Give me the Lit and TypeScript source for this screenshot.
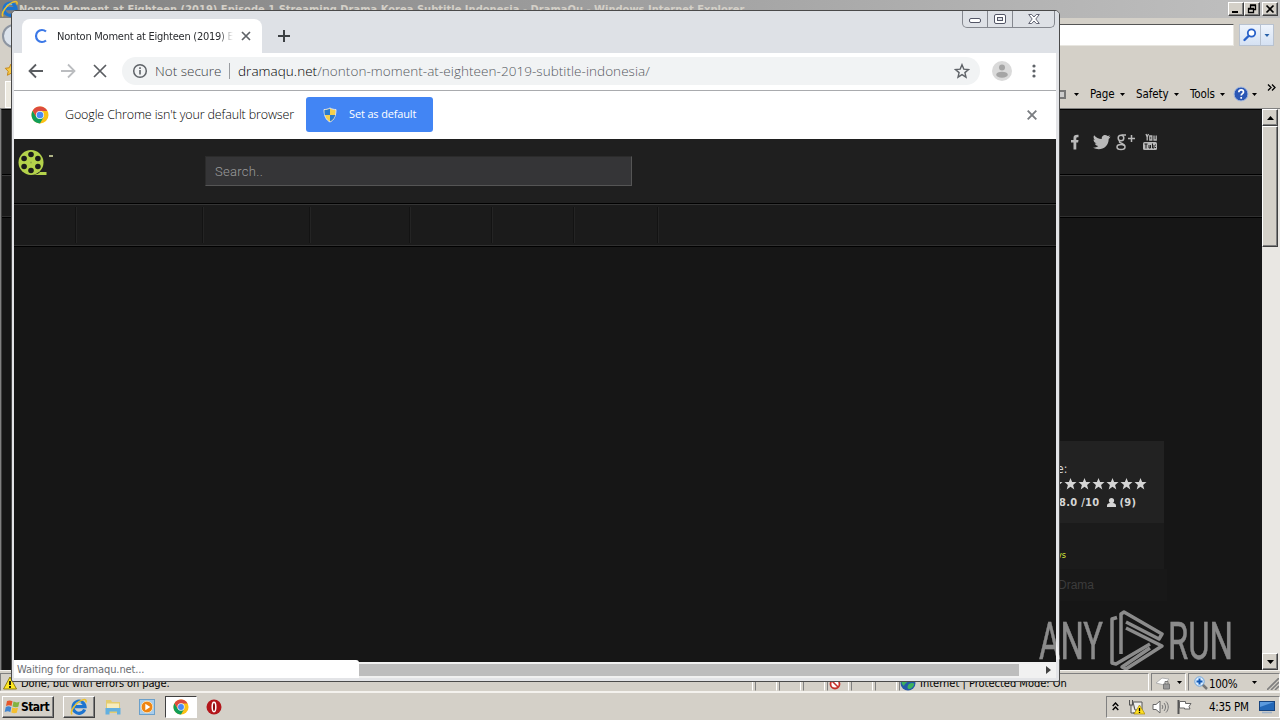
import { LitElement, css, html, svg } from 'lit'
import { customElement } from 'lit/decorators.js'

const chromeLogo = html`
  <svg class="chrome-logo" viewBox="0 0 18 18" width="18" height="18">
    <circle cx="9" cy="9" r="8.5" fill="#fbc116" />
    <path d="M9 9 5.3 11.1 1.64 4.75A8.5 8.5 0 0 0 9 17.5l3.7-6.4z" fill="#109d58" />
    <path d="M9 5H16.4A8.5 8.5 0 0 0 1.64 4.75L5.4 11z" fill="#dd4b3e" />
    <circle cx="9" cy="9" r="4.1" fill="#f4f4f4" />
    <circle cx="9" cy="9" r="3.3" fill="#4a8af4" />
  </svg>
`

const ieLogo = html`
  <svg viewBox="0 0 18 18" width="18" height="18">
    <path d="M14.600 11.500A6 6 0 1 1 15 8.700H5" fill="none" stroke="#1d74cf" stroke-width="3.200" />
    <path d="M5.200 7.500a4.500 4.500 0 0 1 6-3" fill="none" stroke="#6dc3f5" stroke-width="1.200" />
    <path d="M2.200 16.300C-.8 14 5.500 4.600 12 2.100c4-1.500 4.600.4 3.800 2.400" fill="none" stroke="#ecc02c" stroke-width="1.500" />
  </svg>
`

const caret = html`<svg viewBox="0 0 5 3" width="5" height="3"><path d="M0 0h5L2.5 3z" fill="#000" /></svg>`

@customElement('ie-window')
export class IeWindow extends LitElement {
  render() {
    return html`
      <div class="title-bar">
        ${ieLogo}
        <span class="title">Nonton Moment at Eighteen (2019) Episode 1 Streaming Drama Korea Subtitle Indonesia - DramaQu - Windows Internet Explorer</span>
        <span class="btn">
          <svg viewBox="0 0 12 10" width="12" height="10"><path d="M2 8h6" stroke="#000" stroke-width="2" /></svg>
        </span>
        <span class="btn">
          <svg viewBox="0 0 12 10" width="12" height="10">
            <path d="M4.5 4V1.500h5v4H8M4 1h6" fill="none" stroke="#000" stroke-width="1.300" />
            <path d="M2.500 4.500h5v4h-5zM2 5h6" fill="none" stroke="#000" stroke-width="1.300" />
          </svg>
        </span>
        <span class="btn close">
          <svg viewBox="0 0 12 10" width="12" height="10"><path d="M2.500 1.500l7 7M9.500 1.500l-7 7" stroke="#000" stroke-width="1.700" /></svg>
        </span>
      </div>
      <div class="address-row">
        <span class="back"></span>
        <span class="field"></span>
        <span class="search">
          <svg viewBox="0 0 20 20" width="20" height="20">
            <circle cx="11.500" cy="8" r="3.700" fill="#fff" stroke="#2861c9" stroke-width="1.800" />
            <path d="M8.500 11l-4 4" stroke="#2861c9" stroke-width="2.400" stroke-linecap="round" />
          </svg>
          <i><svg viewBox="0 0 5 3" width="6" height="3"><path d="M0 0h5L2.500 3z" fill="#2861a9" /></svg></i>
        </span>
      </div>
      <div class="command-row">
        <svg class="fav" viewBox="0 0 12 14" width="12" height="14">
          <path d="M7 1l1.800 3.800 4 .5-3 3 .8 4L7 10.300l-3.600 2 .8-4-3-3 4-.5z" fill="#f7c947" stroke="#c78a1b" />
        </svg>
        <span class="page-tab"></span>
        <span class="printer"></span>
        <span class="cmd c1">${caret}</span>
        <span class="cmd c2">Page ${caret}</span>
        <span class="cmd c3">Safety ${caret}</span>
        <span class="cmd c4">Tools ${caret}</span>
        <span class="cmd c5">
          <svg viewBox="0 0 16 16" width="16" height="16">
            <circle cx="8" cy="8" r="7" fill="#2b57b5" stroke="#a9bde0" />
            <path d="M5.800 6.200c0-3.200 4.700-3 4.700-.2 0 1.700-2.300 1.700-2.300 3.600M8.200 11v1.800" fill="none" stroke="#fff" stroke-width="1.700" />
          </svg>
          ${caret}
        </span>
        <svg class="more" viewBox="0 0 9 7" width="9" height="7">
          <path d="M1 .5l3 3-3 3M5 .5l3 3-3 3" fill="none" stroke="#000" stroke-width="1.300" />
        </svg>
      </div>
      <div class="body">
        <div class="page">
          <div class="header">
            <svg viewBox="0 0 90 20" width="90" height="20" fill="#b9b9b9">
              <path d="M5.500 17.500v-7H3V8h2.500V6c0-2.300 1.300-3.500 5-3.200v2.400c-1.800 0-2.200.1-2.200 1.300V8h2.200l-.4 2.500H8.300v7z" />
              <path
                d="M42.500 4.600c-.7.3-1.300.5-2 .6.700-.5 1.200-1.200 1.500-2-.700.4-1.500.7-2.400.9-2.500-2.500-6.500-.4-5.800 3-3.200-.1-5.900-1.600-7.700-3.900-1 1.700-.5 3.800 1.100 4.900-.6 0-1.200-.2-1.700-.5 0 1.800 1.200 3.300 3 3.700-.6.200-1.100.2-1.700.1.500 1.500 1.800 2.500 3.500 2.600-1.600 1.200-3.500 1.800-5.500 1.600 7.300 4.400 15.900-.1 15.900-8.600.7-.6 1.300-1.300 1.800-2.400z"
              />
              <g fill="none" stroke="#b9b9b9" stroke-width="1.500">
                <circle cx="53" cy="6" r="2.800" />
                <ellipse cx="53" cy="15" rx="4" ry="2.500" />
                <path d="M52 9c-2.500 2 4.500 2 4.500 5M53.500 3h4.500M60 6.500h7M63.500 3v7" />
                <path d="M78 2l1.200 3v3.500M80.500 2L79.200 5M81.800 4h2v4h-2zM86 3.500V8h2.200V3.500" stroke-width="1.300" />
              </g>
              <rect x="75" y="10" width="14" height="8" rx="1.500" />
              <path d="M76.500 12h3M78 12v4.500M81 13v3h1.500v-3M84.500 11.500v4.500h1.500v-3M87 13h1M87 15.500h1" stroke="#1f1f1f" fill="none" />
            </svg>
          </div>
          <div class="nav"></div>
          <div class="sidebar">
            <div class="rating">
              <div class="label">e:</div>
              <svg viewBox="0 0 92 12" width="92" height="12" fill="#d5d5d5">
                ${[0, 1, 2, 3, 4, 5, 6].map(
                  (i) => svg`<path transform="translate(${i * 14 - 7.5} 0)" d="M6 0l1.600 4.100H12L8.600 6.900 9.800 11.500 6 8.800l-3.800 2.700 1.200-4.600L0 4.100h4.400z" />`
                )}
              </svg>
              <div class="score">
                8.0 /10
                <svg viewBox="0 0 9 9" width="9" height="9" fill="#d5d5d5"><circle cx="4.500" cy="2.600" r="2.600" /><path d="M0 9V7.500C0 5.500 2 5 4.500 5S9 5.500 9 7.500V9z" /></svg>
                (9)
              </div>
            </div>
            <div class="eps">vs</div>
            <div class="genre">Drama</div>
          </div>
        </div>
        <div class="scroll">
          <span class="arrow"><svg viewBox="0 0 7 4" width="7" height="4"><path d="M0 4h7L3.500 0z" /></svg></span>
          <span class="thumb"></span>
          <span class="track"></span>
          <span class="arrow"><svg viewBox="0 0 7 4" width="7" height="4"><path d="M0 0h7L3.500 4z" /></svg></span>
        </div>
      </div>
      <div class="status">
        <span class="pane done">
          <svg viewBox="0 0 14 14" width="14" height="14">
            <path d="M7 1l6.500 12H.5z" fill="#ffe81f" stroke="#8f7d10" />
            <path d="M7 5v4M7 10v2" stroke="#000" stroke-width="1.700" />
          </svg>
          <b>Done, but with errors on page.</b>
        </span>
        <span class="pane"></span><span class="pane"></span><span class="pane"></span>
        <span class="pane">
          <svg viewBox="0 0 20 14" width="20" height="14">
            <path d="M9 4c4-3 7 1 10-3" fill="none" stroke="#999" stroke-width="1.500" />
            <circle cx="7" cy="8" r="4.500" fill="#fff" stroke="#c5322b" stroke-width="1.800" />
            <path d="M4 5l6 6" stroke="#c5322b" stroke-width="1.600" />
          </svg>
        </span>
        <span class="pane"></span><span class="pane"></span>
        <span class="pane zone">
          <svg viewBox="0 0 16 16" width="16" height="16">
            <circle cx="8" cy="8" r="7.500" fill="#2459a8" />
            <path d="M3 3c4-2 7 0 5 3s-3 2-4 5C1 9 1 6 3 3zM9 9c3-2 6-1 5 1s-3 4-5 4-2-3 0-5z" fill="#3eb25c" />
          </svg>
          <b>Internet | Protected Mode: On</b>
        </span>
        <span class="pane lock">
          <svg viewBox="0 0 18 16" width="18" height="16">
            <path d="M1 8l6-5 7 1-5 6z" fill="#fff" stroke="#b0b0b0" />
            <path d="M8.500 9h6v5h-6z" fill="#999" stroke="#777" />
            <path d="M10 9V6.500h3V9" fill="none" stroke="#777" />
          </svg>
          ${caret}
        </span>
        <span class="pane zoom">
          <svg viewBox="0 0 14 14" width="14" height="14">
            <path d="M8 8l5 5" stroke="#777" stroke-width="2.500" />
            <circle cx="5.500" cy="5.500" r="4.700" fill="#d9ecff" stroke="#6ea4db" />
            <path d="M5.500 2.500v6M2.500 5.500h6" stroke="#1259b5" stroke-width="2" />
          </svg>
          <b>100%</b>
          ${caret}
          <svg class="grip" viewBox="0 0 12 12" width="12" height="12">
            <path d="M0 12L12 0M4 12l8-8M8 12l4-4" stroke="#808080" stroke-width="1.600" />
          </svg>
        </span>
      </div>
    `
  }

  static styles = css`
    :host {
      display: flex;
      flex-direction: column;
      width: 1280px;
      height: 693px;
      background: #d4d0c8;
      font: 11px 'DejaVu Sans Condensed', 'DejaVu Sans', sans-serif;
      font-stretch: condensed;
      overflow: hidden;
    }
    * {
      box-sizing: border-box;
    }
    svg {
      flex: none;
    }
    .title-bar {
      display: flex;
      align-items: center;
      height: 18px;
      padding: 0 2px 0 1px;
      background: linear-gradient(90deg, #808080, #c0c0c0);
    }
    .title {
      flex: 1;
      font-weight: bold;
      color: #d4d0c8;
      white-space: nowrap;
      letter-spacing: 0.03px;
    }
    .btn {
      display: flex;
      align-items: center;
      justify-content: center;
      width: 16px;
      height: 14px;
      background: #d4d0c8;
      border: 1px solid;
      border-color: #fff #404040 #404040 #fff;
      box-shadow: inset -1px -1px #808080;
    }
    .close {
      margin-left: 2px;
    }
    .address-row {
      display: flex;
      justify-content: flex-end;
      height: 32px;
      padding: 6px 6px 0 0;
    }
    .back {
      width: 24px;
      height: 24px;
      margin: 0 auto 0 2px;
      border-radius: 50%;
      border: 2px solid #8d95a1;
      background: #dce3ec;
    }
    .field {
      width: 300px;
      height: 22px;
      background: #fff;
      border: 1px solid #808080;
      border-color: #555 #e8e6e0 #e8e6e0 #555;
    }
    .search {
      display: flex;
      align-items: center;
      width: 35px;
      height: 22px;
      margin-left: 5px;
      background: linear-gradient(#eef4fc, #d5e1f2);
      border: 1px solid #b8c2d0;
    }
    .search i {
      display: flex;
      align-items: center;
      justify-content: center;
      flex: 1;
      height: 100%;
      border-left: 1px solid #b8c2d0;
    }
    .command-row {
      display: flex;
      align-items: flex-end;
      height: 59px;
      padding-bottom: 3px;
      border-bottom: 1px solid #808080;
    }
    .fav {
      align-self: flex-start;
      margin: 13px 0 0 4px;
    }
    .page-tab {
      width: 300px;
      height: 27px;
      margin: 0 auto -3px -11px;
      border: 1px solid #fff;
      background: #ece9e0;
    }
    .printer {
      width: 8px;
      height: 9px;
      margin: 0 8px 6px 0;
      border: 2px solid #777;
      background: #ccc;
    }
    .cmd {
      display: flex;
      align-items: center;
      height: 22px;
      gap: 5px;
      font-size: 11.500px;
      letter-spacing: -0.1px;
    }
    .c1 {
      width: 16px;
    }
    .c2 {
      width: 46px;
    }
    .c3 {
      width: 54px;
    }
    .c4 {
      width: 43px;
    }
    .c5 {
      gap: 3px;
      width: 34px;
    }
    .more {
      margin: 0 4px 14px 0;
    }
    .body {
      display: flex;
      flex: 1;
      border-left: 1px solid #808080;
      min-height: 0;
    }
    .page {
      flex: 1;
      border-left: 1px solid #404040;
      border-top: 1px solid #000;
      background: #161616;
      overflow: hidden;
    }
    .header {
      height: 65px;
      padding: 22px 0 0 1065.500px;
      background: #1f1f1f;
      border-bottom: 1px solid #000;
    }
    .nav {
      height: 43px;
      background: #1b1b1b;
      border-top: 1px solid #383838;
      border-bottom: 1px solid #000;
      box-shadow: inset 0 -1px #303030;
    }
    .sidebar {
      width: 205px;
      margin: 223px 0 0 960px;
      color: #d5d5d5;
    }
    .rating {
      width: 202px;
      height: 82px;
      padding: 21px 0 0 96px;
      background: #222;
    }
    .rating svg {
      display: block;
    }
    .label {
      height: 16px;
      margin-left: -1px;
      font-size: 12px;
      line-height: 14px;
    }
    .score {
      display: flex;
      align-items: center;
      gap: 3px;
      height: 24px;
      padding-left: 1px;
      font-weight: bold;
      letter-spacing: 0.3px;
    }
    .score svg {
      margin-left: 5px;
    }
    .eps {
      width: 202px;
      height: 46px;
      padding: 26px 0 0 95px;
      font-size: 9px;
      line-height: 12px;
      color: #dcec3c;
      background: #1b1b1b;
    }
    .genre {
      height: 32px;
      padding: 9px 0 0 96px;
      font: 12px 'Liberation Sans', sans-serif;
      color: #3c3c3c;
      background: #181818;
    }
    .scroll {
      display: flex;
      flex-direction: column;
      width: 18px;
      padding-right: 2px;
      background: #e9e7e3;
    }
    .arrow,
    .thumb {
      display: flex;
      align-items: center;
      justify-content: center;
      height: 17px;
      background: #d4d0c8;
      border: 1px solid;
      border-color: #fff #404040 #404040 #fff;
      box-shadow: inset -1px -1px #808080;
    }
    .thumb {
      height: 121px;
    }
    .track {
      flex: 1;
    }
    .status {
      display: flex;
      gap: 2px;
      height: 23px;
      padding-top: 2px;
      border-top: 1px solid #f4f2ee;
      border-bottom: 2px solid #f4f2ee;
    }
    .pane {
      display: flex;
      align-items: center;
      width: 22px;
      padding-top: 1px;
      border: 1px solid;
      border-color: #808080 #fff #d4d0c8 #808080;
    }
    .pane b {
      padding-top: 2px;
      font-weight: normal;
      white-space: nowrap;
    }
    .done {
      width: 753px;
      gap: 4px;
      padding-left: 2px;
      letter-spacing: -0.1px;
    }
    .zone {
      width: 250px;
      gap: 4px;
    }
    .lock {
      width: 35px;
      gap: 4px;
      padding-left: 3px;
    }
    .zoom {
      width: 92px;
      padding-left: 5px;
    }
    .zoom b {
      width: 43px;
      margin-left: 1px;
      font-size: 11.500px;
      letter-spacing: -0.3px;
    }
    .grip {
      margin: auto 0 0 auto;
    }
  `
}

@customElement('chrome-window')
export class ChromeWindow extends LitElement {
  // Widths of the menu cells that have not received their labels yet
  private cells = [63, 127, 107, 100, 82, 82, 84]

  render() {
    return html`
      <div class="tab-strip">
        <div class="tab">
          <svg viewBox="0 0 16 16" width="16" height="16">
            <path d="M13 3.500a6 6 0 1 0 0 9" fill="none" stroke="#3b78e7" stroke-width="2.200" />
          </svg>
          <span class="tab-title">Nonton Moment at Eighteen (2019) E</span>
          <svg viewBox="0 0 10 10" width="10" height="10"><path d="M1 1l8 8M9 1L1 9" stroke="#5f6368" stroke-width="1.700" /></svg>
        </div>
        <svg class="new-tab" viewBox="0 0 12 12" width="12" height="12"><path d="M6 0v12M0 6h12" stroke="#3c4043" stroke-width="2" /></svg>
        <div class="controls">
          <span><svg viewBox="0 0 12 6" width="12" height="6"><rect x=".5" y=".5" width="11" height="4" rx="1.500" fill="#fff" stroke="#535666" /></svg></span>
          <span>
            <svg viewBox="0 0 12 10" width="12" height="10">
              <rect x=".5" y=".5" width="11" height="9" rx="1.500" fill="#fff" stroke="#535666" />
              <rect x="3.500" y="3.500" width="5" height="3" fill="#dee1e6" stroke="#535666" />
            </svg>
          </span>
          <span class="wide">
            <svg viewBox="0 0 12 10" width="12" height="10">
              <path d="M.7.5h3L6 3 8.300.5h3L7.800 5l3.500 4.500h-3L6 7 3.700 9.500h-3L4.200 5z" fill="#fff" stroke="#535666" stroke-width=".9" />
            </svg>
          </span>
        </div>
      </div>
      <div class="toolbar">
        <svg viewBox="0 0 16 16" width="16" height="16"><path d="M15 8H2M8 1.500L1.500 8 8 14.500" fill="none" stroke="#5a5d61" stroke-width="1.800" /></svg>
        <svg viewBox="0 0 16 16" width="16" height="16"><path d="M1 8h13M8 1.500L14.500 8 8 14.500" fill="none" stroke="#bbbdc0" stroke-width="1.800" /></svg>
        <svg viewBox="0 0 16 16" width="16" height="16"><path d="M2 2l12 12M14 2L2 14" stroke="#5a5d61" stroke-width="1.700" /></svg>
        <div class="omnibox">
          <svg viewBox="0 0 16 16" width="16" height="16">
            <circle cx="8" cy="8" r="6.300" fill="none" stroke="#5f6368" stroke-width="1.500" />
            <path d="M8 7v4.500M8 4.300v1.700" stroke="#5f6368" stroke-width="1.600" />
          </svg>
          <span class="secure">Not secure</span>
          <span class="url"><em>dramaqu.net</em>/nonton-moment-at-eighteen-2019-subtitle-indonesia/</span>
          <svg viewBox="0 0 16 16" width="16" height="16">
            <path d="M8 1.700l1.800 4.400 4.700.4-3.600 3.100 1.100 4.600L8 11.700l-4 2.500 1.100-4.600-3.600-3.100 4.700-.4z" fill="none" stroke="#5f6368" stroke-width="1.400" />
          </svg>
        </div>
        <svg class="avatar" viewBox="0 0 20 20" width="20" height="20">
          <circle cx="10" cy="10" r="10" fill="#dadada" />
          <circle cx="10" cy="6.500" r="3" fill="#a5a5a5" />
          <ellipse cx="10" cy="13.700" rx="5.800" ry="3" fill="#a5a5a5" />
        </svg>
        <svg class="menu" viewBox="0 0 4 14" width="4" height="14" fill="#5f6368">
          <circle cx="2" cy="2" r="1.600" /><circle cx="2" cy="7" r="1.600" /><circle cx="2" cy="12" r="1.600" />
        </svg>
      </div>
      <div class="infobar">
        ${chromeLogo}
        <span class="message">Google Chrome isn't your default browser</span>
        <span class="default-btn">
          <svg viewBox="0 0 14 16" width="14" height="16">
            <path d="M7 1c2 1.200 4 1.500 6 1.500C13 9 11 13 7 15 3 13 1 9 1 2.500 3 2.500 5 2.200 7 1z" fill="#f5d04c" stroke="#dfe4ea" />
            <path d="M7 1.800V8H1.700C1.500 6 1.500 4.500 1.500 3c2 0 3.500-.2 5.500-1.200zM7 8h5.200C11.500 11 10 13 7 14.500z" fill="#2a7ad0" />
          </svg>
          <span>Set as default</span>
        </span>
        <svg class="dismiss" viewBox="0 0 10 10" width="10" height="10"><path d="M.7.700l8.600 8.600M9.300.700L.7 9.300" stroke="#7a7d81" stroke-width="1.900" /></svg>
      </div>
      <div class="page">
        <div class="header">
          <svg viewBox="0 0 38 28" width="38" height="28">
            <circle cx="13" cy="13.500" r="12.500" fill="#b4d24b" />
            <path d="M13 26c6 0 8-2 9-3h6.500v3z" fill="#b4d24b" />
            <g fill="#1b1b1b">
              <circle cx="13" cy="5.500" r="2.800" /><circle cx="19.900" cy="9.500" r="2.800" /><circle cx="19.900" cy="17.500" r="2.800" />
              <circle cx="13" cy="21.500" r="2.800" /><circle cx="6.100" cy="17.500" r="2.800" /><circle cx="6.100" cy="9.500" r="2.800" />
              <circle cx="13" cy="13.500" r="1" fill="#93aa45" />
            </g>
            <path d="M31 7h4" stroke="#dfe6a8" stroke-width="1.500" />
          </svg>
          <span class="search">Search..</span>
        </div>
        <div class="nav">${this.cells.map((w) => html`<span style="width: ${w}px"></span>`)}</div>
      </div>
      <div class="bottom">
        <span class="loading">Waiting for dramaqu.net...</span>
        <span class="thumb"></span>
        <svg viewBox="0 0 5 8" width="5" height="8"><path d="M0 0v8l5-4z" fill="#404040" /></svg>
      </div>
    `
  }

  static styles = css`
    :host {
      display: flex;
      flex-direction: column;
      width: 1049px;
      height: 672px;
      box-sizing: border-box;
      padding: 0 3px 3px 2px;
      border: 1px solid #4a4a4a;
      border-radius: 5px 5px 2px 2px;
      background: #e3e4e7;
      font: 12px 'Noto Sans', sans-serif;
      overflow: hidden;
    }
    * {
      box-sizing: border-box;
    }
    svg {
      flex: none;
    }
    .tab-strip {
      display: flex;
      height: 42px;
      margin: 0 -3px 0 -2px;
      padding: 8px 4px 0 10px;
      background: #dee1e6;
    }
    .tab {
      display: flex;
      align-items: center;
      width: 240px;
      height: 34px;
      padding: 0 11px;
      border-radius: 8px 8px 0 0;
      background: #fff;
    }
    .tab-title {
      flex: 1;
      margin: 0 8px;
      font: 11px 'DejaVu Sans Condensed', 'DejaVu Sans', sans-serif;
      font-stretch: condensed;
      letter-spacing: -0.25px;
      color: #2b2d30;
      white-space: nowrap;
      overflow: hidden;
      mask-image: linear-gradient(90deg, #000 92%, transparent);
    }
    .new-tab {
      margin: 11px auto 0 16px;
    }
    .controls {
      display: flex;
      width: 93px;
      height: 17px;
      margin-top: -8px;
      border: 1px solid #85888f;
      border-top: none;
      border-radius: 0 0 5px 5px;
    }
    .controls span {
      display: flex;
      align-items: center;
      justify-content: center;
      width: 25px;
      border-right: 1px solid #85888f;
    }
    .controls span:first-child {
      padding-top: 4px;
    }
    .controls .wide {
      flex: 1;
      border: none;
    }
    .toolbar {
      display: flex;
      align-items: center;
      height: 38px;
      padding: 0 20px 1px 14px;
      gap: 16px;
      border-bottom: 1px solid #a9abae;
      background: #fff;
    }
    .omnibox {
      display: flex;
      align-items: center;
      flex: 1;
      height: 28px;
      margin: 0 -4px 0 -2px;
      padding: 0 10px;
      border-radius: 14px;
      background: #f1f3f4;
      font: 300 13.500px 'Open Sans', 'Noto Sans', sans-serif;
      color: #55595e;
    }
    .secure {
      margin-left: 7px;
      width: 75px;
      border-right: 1px solid #9a9da1;
      line-height: 16px;
      color: #3c4043;
    }
    .url {
      flex: 1;
      margin-left: 8px;
      letter-spacing: 0.05px;
      white-space: nowrap;
    }
    .url em {
      font-style: normal;
      color: #000;
    }
    .menu {
      margin-left: 4px;
    }
    .infobar {
      display: flex;
      align-items: center;
      height: 48px;
      padding: 0 19px 0 17px;
      background: #fff;
      font: 300 13px 'Open Sans', 'Noto Sans', sans-serif;
      color: #000;
    }
    .message {
      margin: 0 0 1px 16px;
      width: 241px;
      font-size: 12.500px;
      letter-spacing: -0.14px;
      white-space: nowrap;
    }
    .default-btn {
      display: flex;
      align-items: center;
      gap: 12px;
      width: 127px;
      height: 35px;
      margin: 0 auto 1px 0;
      padding-left: 17px;
      border-radius: 3px;
      background: #4285f4;
      color: #fff;
      font-size: 11px;
      font-weight: 400;
      letter-spacing: -0.15px;
      white-space: nowrap;
    }
    .default-btn span {
      padding-bottom: 2px;
    }
    .page {
      flex: 1;
      background: #161616;
    }
    .header {
      display: flex;
      height: 64px;
      padding: 10px 0 0 3.500px;
      background: #1f1f1f;
    }
    .search {
      width: 427px;
      height: 30px;
      margin: 7px 0 0 149.500px;
      padding-left: 9px;
      border: 1px solid #555;
      border-color: #2b2b2b #555 #555 #2b2b2b;
      background: #353537;
      color: #9c9c9c;
      font: 300 13px/29px Roboto, sans-serif;
      letter-spacing: 0.3px;
    }
    .nav {
      display: flex;
      height: 44px;
      padding-top: 3px;
      border-top: 1px solid #000;
      border-bottom: 1px solid #000;
      background: #1b1b1b;
      box-shadow:
        inset 0 1px #353535,
        inset 0 -1px #303030;
    }
    .nav span {
      height: 36px;
      border-right: 1px solid #242424;
      box-shadow: inset -1px 0 #131313;
    }
    .bottom {
      display: flex;
      align-items: center;
      height: 16px;
      padding-right: 5px;
      background: #f1f1f1;
    }
    .loading {
      width: 345px;
      height: 18px;
      margin-top: -2px;
      padding-left: 3px;
      border-radius: 0 3px 0 0;
      background: #fff;
      font: 11px/20px 'DejaVu Sans Condensed', 'DejaVu Sans', sans-serif;
      font-stretch: condensed;
      letter-spacing: -0.12px;
      color: #6b6e73;
    }
    .thumb {
      width: 660px;
      height: 12px;
      margin-right: auto;
      background: #bdbdbd;
    }
  `
}

@customElement('task-bar')
export class TaskBar extends LitElement {
  render() {
    return html`
      <span class="start">
        <svg viewBox="0 0 17 16" width="17" height="16">
          <path d="M3 2c2-1 4-.5 5.500.3L7.500 7C6 6 4 6 2 7z" fill="#e5562b" />
          <path d="M9.500 2.600c2 1 4 1 6 .2l-1.200 5c-2 .8-4 .5-5.800-.3z" fill="#82b341" />
          <path d="M1.800 8c2-1 4-.8 5.500.2l-1 5C5 12 3 12 .7 13z" fill="#3f84d0" />
          <path d="M8.300 8.500c2 1 4 1 5.700.3l-1.200 5c-2 .7-4 .4-5.500-.3z" fill="#f4bf30" />
        </svg>
        Start
      </span>
      <span class="app raised">${ieLogo}</span>
      <span class="app">
        <svg viewBox="0 0 18 18" width="18" height="18">
          <path d="M2 2h5l1 2h8v11H2z" fill="#e3cc70" />
          <path d="M3 5.500h12V12H3z" fill="#f6ecbc" />
          <path d="M1.500 10h15v6.500H13v-3H5.500v3h-4z" fill="#62b0e0" />
        </svg>
      </span>
      <span class="app">
        <svg viewBox="0 0 16 16" width="16" height="16">
          <rect x=".5" y=".5" width="15" height="15" fill="#a8cdec" stroke="#6ba0ca" />
          <circle cx="8" cy="8" r="5.800" fill="#ef8512" stroke="#f9dcae" />
          <path d="M6.300 4.800v6.400L11.300 8z" fill="#fff" />
        </svg>
      </span>
      <span class="app pressed">${chromeLogo}</span>
      <span class="app">
        <svg viewBox="0 0 16 16" width="16" height="16">
          <circle cx="8" cy="8" r="7.500" fill="#b3161b" />
          <ellipse cx="8" cy="8" rx="1.800" ry="4.700" fill="#8e0d12" stroke="#fff" stroke-width="1.500" />
        </svg>
      </span>
      <span class="tray">
        <svg viewBox="0 0 7 9" width="7" height="9"><path d="M.7 4l2.800-3 2.800 3M.7 8l2.800-3 2.800 3" fill="none" stroke="#000" stroke-width="1.400" /></svg>
        <svg viewBox="0 0 17 16" width="17" height="16">
          <path d="M5 3h9v8H7zM1.500 1v5M4.500 1v5M1 6h4M3 6v8h6M5 14h4" fill="#eee" stroke="#555" />
          <path d="M11.500 6L17 15H6z" fill="#ffdf1f" stroke="#a48710" stroke-width=".7" />
          <path d="M11.500 9v3M11.500 12.800v1.200" stroke="#000" stroke-width="1.300" />
        </svg>
        <svg viewBox="0 0 17 16" width="17" height="16">
          <path d="M1 5.500h3L8 2v12l-4-3.500H1z" fill="#fff" stroke="#666" />
          <path d="M10 6c1 1 1 3 0 4M12 4c2 2.500 2 5.500 0 8M14 2.500c3 3 3 8 0 11" fill="none" stroke="#777" />
        </svg>
        <svg viewBox="0 0 17 16" width="17" height="16">
          <path d="M2.500 1v14" stroke="#555" stroke-width="2" />
          <path d="M3.500 2.500h6v2h5.500l-2 3 1 2.500H8.500V9h-5z" fill="#fff" stroke="#666" />
        </svg>
        <span class="clock">4:35 PM</span>
        <svg viewBox="0 0 16 14" width="16" height="14">
          <rect x=".5" y="1.500" width="15" height="9" fill="#2368b8" stroke="#17447f" />
          <path d="M1 2h14L1 7z" fill="#5b9ade" />
          <path d="M3 12.500h10" stroke="#9fb2c8" stroke-width="1.500" />
        </svg>
      </span>
    `
  }

  static styles = css`
    :host {
      display: flex;
      align-items: center;
      height: 27px;
      padding-left: 2px;
      box-sizing: border-box;
      background: #d4d0c8;
      font: 11px 'DejaVu Sans Condensed', 'DejaVu Sans', sans-serif;
      font-stretch: condensed;
    }
    * {
      box-sizing: border-box;
    }
    .start,
    .app {
      display: flex;
      align-items: center;
      justify-content: center;
      width: 34px;
      height: 22px;
    }
    .start {
      width: 52px;
      margin-right: 9px;
      padding-right: 3px;
      font-size: 12px;
      font-weight: bold;
      letter-spacing: -0.5px;
    }
    .start,
    .raised {
      border: 1px solid;
      border-color: #fff #404040 #404040 #fff;
      box-shadow: inset -1px -1px #808080;
    }
    .raised {
      width: 32px;
    }
    .raised + .app {
      margin-left: 1px;
    }
    .pressed {
      width: 32px;
      border: 1px solid;
      border-color: #404040 #fff #fff #404040;
      background: #fff;
      margin: 0 0 0 1px;
    }
    .pressed svg {
      width: 16px;
    }
    .tray {
      display: flex;
      align-items: center;
      width: 174px;
      height: 22px;
      margin-left: auto;
      padding: 0 4px 0 5px;
      border: 1px solid;
      border-color: #808080 #fff #fff #808080;
    }
    .tray svg {
      flex: none;
      margin-right: 7px;
    }
    .tray svg:first-child {
      margin-right: 9px;
    }
    .tray svg:last-child {
      margin: 0 0 0 auto;
    }
    .clock {
      margin-left: 9px;
      font-size: 11.500px;
      letter-spacing: -0.3px;
      white-space: nowrap;
    }
  `
}

@customElement('app-root')
export class AppRoot extends LitElement {
  render() {
    return html`
      <ie-window></ie-window>
      <task-bar></task-bar>
      <chrome-window></chrome-window>
      <svg class="watermark" viewBox="0 0 240 64" width="240" height="64">
        <text x="1" y="51" textLength="64" lengthAdjust="spacingAndGlyphs">ANY</text>
        <text x="130" y="51" textLength="65" lengthAdjust="spacingAndGlyphs">RUN</text>
        <g fill="none" stroke-width="3.500" stroke-linejoin="round">
          <path d="M79 9.500l-5 1.500v44l4 1 34-20" />
          <path d="M83 46V6l3-2 38 22-3 5-33-17" />
          <path d="M88 20l36 18-36 23-4-2 28-19" />
        </g>
      </svg>
    `
  }

  static styles = css`
    :host {
      position: relative;
      display: block;
      width: 1280px;
      height: 720px;
      overflow: hidden;
    }
    chrome-window {
      position: absolute;
      left: 11px;
      top: 10px;
    }
    .watermark {
      position: absolute;
      left: 1038px;
      top: 608px;
      opacity: 0.5;
      fill: #fff;
      stroke: #fff;
      stroke-width: 0.5px;
      font: 400 52px Roboto, sans-serif;
    }
  `
}

declare global {
  interface HTMLElementTagNameMap {
    'app-root': AppRoot
    'ie-window': IeWindow
    'chrome-window': ChromeWindow
    'task-bar': TaskBar
  }
}
